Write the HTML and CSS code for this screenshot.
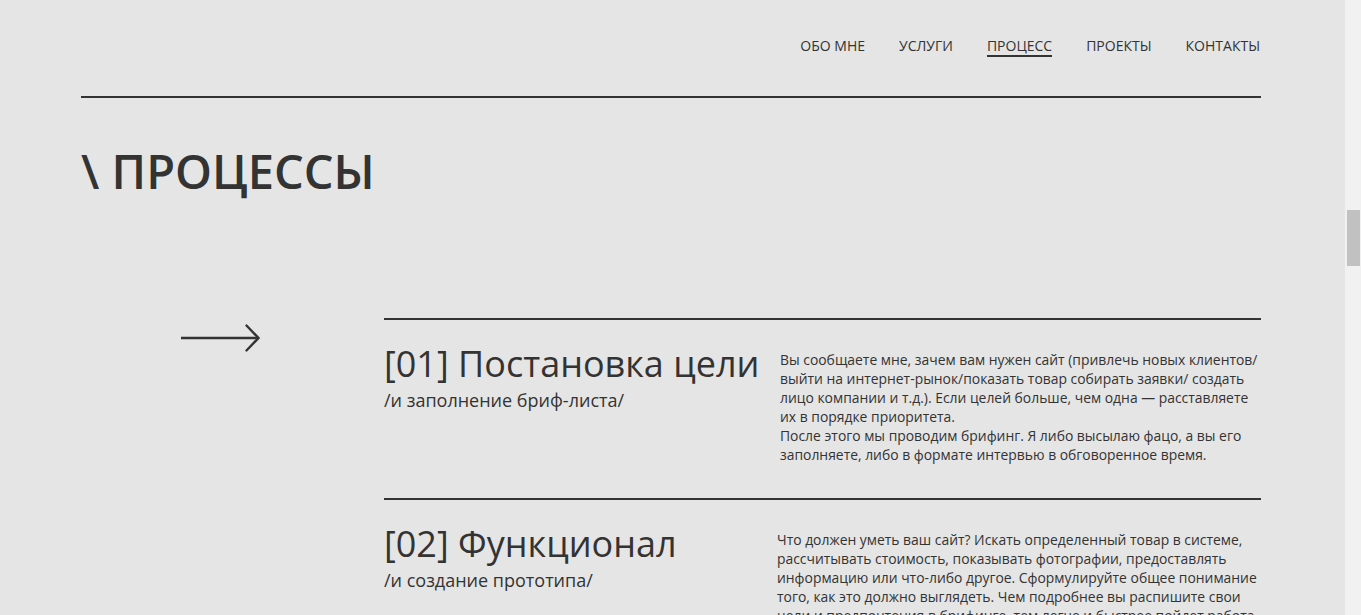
FILE: index.html
```html
<!DOCTYPE html>
<html lang="ru">
<head>
<meta charset="utf-8">
<title>Процессы</title>
<link rel="stylesheet" href="styles.css">
</head>
<body>
<div class="page">
  <div class="container">
    <header class="header">
      <nav class="nav">
        <a class="nav-link" href="#">Обо мне</a>
        <a class="nav-link" href="#">Услуги</a>
        <a class="nav-link active" href="#">Процесс</a>
        <a class="nav-link" href="#">Проекты</a>
        <a class="nav-link" href="#">Контакты</a>
      </nav>
    </header>

    <h1 class="page-title">\ Процессы</h1>

    <section class="process">
      <div class="process-aside">
        <svg class="arrow" width="80" height="28" viewBox="0 0 80 28" aria-hidden="true">
          <path d="M0 14 H77" stroke="#333" stroke-width="2.4" fill="none"/>
          <path d="M65.5 1.5 L77.5 14 L65.5 26.5" stroke="#333" stroke-width="2.4" fill="none" stroke-linecap="round" stroke-linejoin="miter"/>
        </svg>
      </div>
      <div class="process-list">
        <article class="step">
          <div class="step-head">
            <h2 class="step-title">[01] Постановка цели</h2>
            <p class="step-sub">/и заполнение бриф-листа/</p>
          </div>
          <p class="step-text">Вы сообщаете мне, зачем вам нужен сайт (привлечь новых клиентов/ выйти на интернет-рынок/показать товар собирать заявки/ создать лицо компании и т.д.). Если целей больше, чем одна — расставляете их в порядке приоритета.<br>После этого мы проводим брифинг. Я либо высылаю фацо, а вы его заполняете, либо в формате интервью в обговоренное время.</p>
        </article>
        <article class="step">
          <div class="step-head">
            <h2 class="step-title">[02] Функционал</h2>
            <p class="step-sub">/и создание прототипа/</p>
          </div>
          <p class="step-text step-text-wide">Что должен уметь ваш сайт? Искать определенный товар в системе, рассчитывать стоимость, показывать фотографии, предоставлять информацию или что-либо другое. Сформулируйте общее понимание того, как это должно выглядеть. Чем подробнее вы распишите свои цели и предпочтения в брифинге, тем легче и быстрее пойдет работа над прототипом.</p>
        </article>
      </div>
    </section>
  </div>
</div>
<div class="scrollbar" aria-hidden="true"><div class="scrollbar-thumb"></div></div>
</body>
</html>
```

FILE: styles.css
```css
html, body {
  margin: 0;
  padding: 0;
  height: 100%;
  overflow: hidden;
}

body {
  display: flex;
  background: #e5e5e5;
  color: #333;
  font-family: "Open Sans", "Liberation Sans", sans-serif;
}

.page {
  flex: 1;
  min-width: 0;
}

.container {
  width: 1180px;
  margin-left: 81px;
}

.header {
  padding-top: 36px;
  padding-bottom: 39px;
  border-bottom: 2px solid #333;
}

.nav {
  display: flex;
  justify-content: flex-end;
  gap: 34px;
  padding-right: 1px;
}

.nav-link {
  font-size: 14px;
  line-height: 19px;
  text-transform: uppercase;
  color: #333;
  text-decoration: none;
  border-bottom: 2px solid transparent;
}

.nav-link.active {
  border-bottom-color: #333;
}

.page-title {
  margin: 44px 0 0;
  font-size: 47px;
  line-height: 58px;
  font-weight: 600;
  text-transform: uppercase;
  color: #333;
}

.process {
  display: grid;
  grid-template-columns: 303px 1fr;
  margin-top: 118px;
}

.process-aside {
  padding-left: 100px;
  padding-top: 6px;
}

.arrow {
  display: block;
}

.step {
  display: grid;
  grid-template-columns: 396px 1fr;
  border-top: 2px solid #333;
  padding-bottom: 34px;
}

.step-head {
  padding-top: 22px;
}

.step-title {
  margin: 0;
  font-size: 36px;
  line-height: 43px;
  font-weight: 400;
  color: #333;
  white-space: nowrap;
}

.step-sub {
  margin: 3px 0 0;
  font-size: 18px;
  line-height: 24px;
  color: #333;
}

.step-text {
  margin: 0 -2px 0 0;
  padding-top: 30px;
  font-size: 13.9px;
  line-height: 19px;
  color: #333;
}

.step-text-wide {
  margin-left: -3px;
}

.scrollbar {
  flex: 0 0 16px;
  height: 100%;
  background: #f1f1f1;
}

.scrollbar-thumb {
  margin: 210px 1px 0 2px;
  height: 56px;
  background: #c1c1c1;
}
```
